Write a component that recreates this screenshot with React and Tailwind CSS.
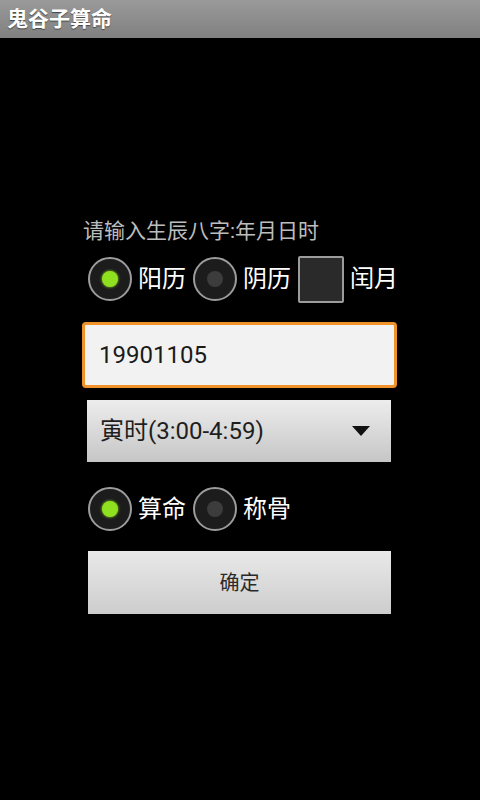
import React from 'react';

const font = { fontFamily: 'Roboto, "Noto Sans CJK SC", sans-serif' };

const Radio = ({ checked }) => (
  <div className="w-[44px] h-[44px] rounded-full border-2 border-[#9c9c9c] bg-[#1c1c1c] flex items-center justify-center shrink-0">
    {checked ? (
      <div className="w-[16px] h-[16px] rounded-full bg-[#8fe01e] shadow-[0_0_3px_#9be22a]" />
    ) : (
      <div className="w-[16px] h-[16px] rounded-full bg-[#3c3c3c]" />
    )}
  </div>
);

const Option = ({ checked, label }) => (
  <div className="flex items-center">
    <Radio checked={checked} />
    <span className="ml-[6px] text-[24px] leading-[28px] text-white">{label}</span>
  </div>
);

export default function App() {
  return (
    <div className="w-[480px] h-[800px] bg-black overflow-hidden" style={font}>
      <div className="h-[38px] bg-gradient-to-b from-[#9a9a9a] to-[#808080] flex items-center pl-[7px]">
        <span className="text-white font-bold text-[21px] leading-none [text-shadow:0_1px_1px_#444]">鬼谷子算命</span>
      </div>

      <div className="pl-[82px] pt-[181px]">
        <div className="ml-[1px] text-[21px] leading-[24px] text-[#bdbdbd]">请输入生辰八字:年月日时</div>

        <div className="mt-[12px] ml-[6px] flex items-center h-[48px]">
          <Option checked label="阳历" />
          <div className="ml-[7px]">
            <Option label="阴历" />
          </div>
          <div className="ml-[7px] w-[46px] h-[47px] border-2 border-[#9c9c9c] bg-[#2a2a2a] rounded-[2px]" />
          <span className="ml-[6px] text-[24px] leading-[28px] text-white">闰月</span>
        </div>

        <div className="mt-[19px] w-[315px] h-[66px] border-[3px] border-[#f0922a] rounded-[4px] bg-[#f2f2f2] flex items-center pl-[14px]">
          <span className="text-[24px] text-[#1a1a1a]">19901105</span>
        </div>

        <div className="mt-[12px] ml-[5px] w-[304px] h-[62px] bg-gradient-to-b from-[#ededed] to-[#c6c6c6] flex items-center justify-between pl-[13px] pr-[21px]">
          <span className="text-[24px] text-[#1e1e1e]">寅时(3:00-4:59)</span>
          <svg width="18" height="10" viewBox="0 0 18 10">
            <path d="M0 0 H18 L9 10 Z" fill="#111" />
          </svg>
        </div>

        <div className="mt-[23px] ml-[6px] flex items-center h-[48px]">
          <Option checked label="算命" />
          <div className="ml-[7px]">
            <Option label="称骨" />
          </div>
        </div>

        <button className="mt-[18px] ml-[6px] w-[303px] h-[63px] bg-gradient-to-b from-[#e9e9e9] to-[#cdcdcd] flex items-center justify-center">
          <span className="text-[20px] text-[#2a2a2a]">确定</span>
        </button>
      </div>
    </div>
  );
}
